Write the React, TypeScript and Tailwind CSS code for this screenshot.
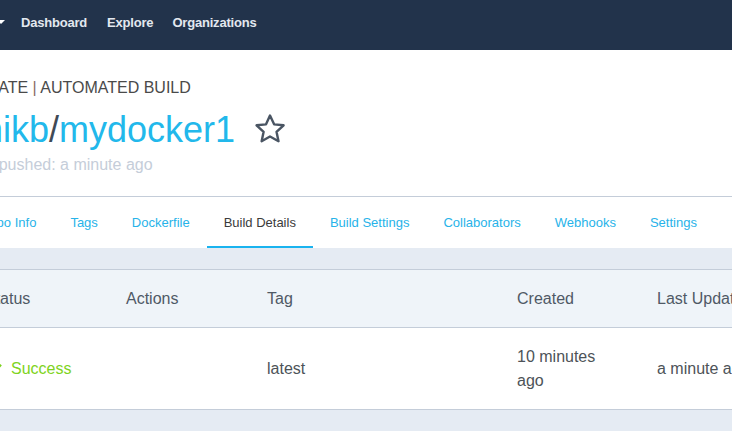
import React from "react";

const tabs = ["Repo Info", "Tags", "Dockerfile", "Build Details", "Build Settings", "Collaborators", "Webhooks", "Settings"];

export default function App() {
  return (
    <div className="w-[732px] h-[431px] overflow-hidden bg-[#e5ebf3]" style={{ fontFamily: '"Liberation Sans", Arial, sans-serif' }}>
      {/* Top nav */}
      <div className="h-[50px] bg-[#22334b] flex items-start pt-[15px] text-[13px] leading-[15px] font-bold text-[#e3e8ef]">
        <div className="ml-[-3px] mt-[5px] w-0 h-0 border-l-[4px] border-r-[4px] border-t-[4px] border-l-transparent border-r-transparent border-t-white" />
        <span className="ml-[16px] tracking-[-0.2px]">Dashboard</span>
        <span className="ml-[20px] tracking-[-0.2px]">Explore</span>
        <span className="ml-[19px] tracking-[-0.2px]">Organizations</span>
      </div>

      {/* Repo header */}
      <div className="bg-white h-[147px] border-b border-[#c4cdd9]">
        <div className="ml-[-38px] pt-[28px] text-[16px] leading-[20px] text-[#4a4a4a] whitespace-nowrap">
          PRIVATE <span className="text-[#8a6a63]">|</span> AUTOMATED BUILD
        </div>
        <div className="ml-[-27px] mt-[12px] flex items-center whitespace-nowrap">
          <span className="text-[36px] leading-[40px] text-[#22b8eb]">
            mikb<span className="text-[#3f4a56]">/</span>mydocker1
          </span>
          <svg className="ml-[17px] mt-[-2px]" width="36" height="34" viewBox="0 0 24 24" fill="none" stroke="#4a5563" strokeWidth="1.7" strokeLinejoin="round">
            <path d="M12 2.5l2.9 6.2 6.7.7-5 4.6 1.4 6.6L12 17.3l-5.9 3.3 1.4-6.6-5-4.6 6.7-.7z" />
          </svg>
        </div>
        <div className="ml-[-36px] mt-[5px] text-[16px] leading-[20px] text-[#c5cdd9] whitespace-nowrap">
          Last pushed: a minute ago
        </div>
      </div>

      {/* Tabs */}
      <div className="bg-white h-[51px] flex items-stretch text-[13px] leading-[15px] whitespace-nowrap ml-[-37px]">
        {tabs.map((t) => {
          const active = t === "Build Details";
          return (
            <div
              key={t}
              className={
                active
                  ? "px-[17px] flex items-center border-b-2 border-[#1ab3ef] text-[#3b3b3b] pt-[2px]"
                  : "px-[17px] flex items-center border-b-2 border-transparent text-[#27b3e9] pt-[2px]"
              }
            >
              {t}
            </div>
          );
        })}
      </div>

      {/* Table */}
      <div className="mt-[21px] ml-[-30px] w-[800px] border-t border-b border-[#c4cdd9] text-[16px] leading-[24px]">
        <div className="h-[58px] bg-[#eff4f9] border-b border-[#c4cdd9] grid grid-cols-[156px_141px_250px_140px_1fr] items-center text-[#4f5966]">
          <div className="pl-[15px]">Status</div>
          <div>Actions</div>
          <div>Tag</div>
          <div>Created</div>
          <div>Last Updated</div>
        </div>
        <div className="h-[81px] bg-white grid grid-cols-[156px_141px_250px_140px_1fr] items-center text-[#4d5358]">
          <div className="pl-[21px] flex items-center text-[#7ed321]">
            <svg width="11" height="10" viewBox="0 0 12 10" className="mr-[9px] mt-[-2px]">
              <path d="M1 5l3.5 3.5L11 1.5" fill="none" stroke="#7ed321" strokeWidth="2.2" />
            </svg>
            Success
          </div>
          <div />
          <div>latest</div>
          <div>
            10 minutes
            <br />
            ago
          </div>
          <div className="whitespace-nowrap">a minute ago</div>
        </div>
      </div>
    </div>
  );
}
